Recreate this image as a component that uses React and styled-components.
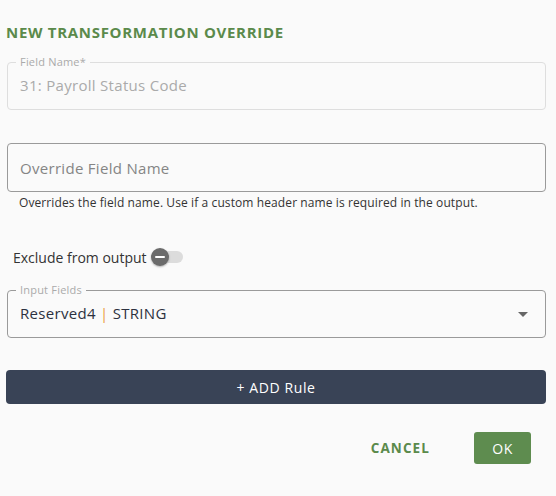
import React from "react";
import styled, { createGlobalStyle } from "styled-components";

const GlobalStyle = createGlobalStyle`
  html, body {
    margin: 0;
    padding: 0;
    background: #fafafa;
  }
  body {
    font-family: "Open Sans", "DejaVu Sans", sans-serif;
    color: #333;
  }
`;

const Dialog = styled.div`
  width: 556px;
  height: 496px;
  box-sizing: border-box;
  padding: 23px 10px 0 7px;
  background: #fafafa;
  display: flex;
  flex-direction: column;
`;

const Title = styled.h2`
  margin: 0 0 15px -1px;
  font-size: 15px;
  font-weight: 700;
  color: #5b8a4b;
  line-height: 18px;
  letter-spacing: 0.7px;
`;

const Outlined = styled.fieldset`
  margin: 0;
  padding: 0 12px 7px;
  min-width: 0;
  border: 1px solid ${(p) => (p.$disabled ? "#dedede" : "#9a9a9a")};
  border-radius: 4px;
`;

const Legend = styled.legend`
  padding: 0 4px;
  margin-left: -4px;
  font-size: 11px;
  line-height: 12px;
  color: #aaa;
  letter-spacing: 0.2px;
`;

const Inner = styled.div`
  height: 34px;
  display: flex;
  align-items: center;
`;

const PlainBox = styled.div`
  height: 49px;
  box-sizing: border-box;
  border: 1px solid #9a9a9a;
  border-radius: 4px;
  padding: 0 12px;
  display: flex;
  align-items: center;
  margin-top: ${(p) => p.$top}px;
`;

const Value = styled.span`
  flex: 1;
  font-size: 15px;
  letter-spacing: 0.3px;
  color: ${(p) => p.$color || "#2c3140"};
`;

const Pipe = styled.span`
  color: #eb9a3c;
`;

const Helper = styled.p`
  margin: 3px 0 0 12px;
  font-size: 12px;
  line-height: 16px;
  letter-spacing: 0.1px;
  color: #333;
`;

const SwitchRow = styled.label`
  display: flex;
  align-items: center;
  height: 18px;
  margin: 37px 0 18px 6px;
  font-size: 14px;
  color: #333;
`;

const Switch = styled.span`
  position: relative;
  width: 33px;
  height: 18px;
  margin-left: 4px;
  display: inline-block;
`;

const Track = styled.span`
  position: absolute;
  left: 4px;
  top: 3px;
  width: 28px;
  height: 12px;
  border-radius: 6px;
  background: #dcdcdc;
`;

const Thumb = styled.span`
  position: absolute;
  left: 0;
  top: 0;
  width: 18px;
  height: 18px;
  border-radius: 50%;
  background: #6b6b6b;
  box-shadow: 0 1px 2px rgba(0, 0, 0, 0.3);
  display: flex;
  align-items: center;
  justify-content: center;
  &::after {
    content: "";
    width: 10px;
    height: 2px;
    background: #fff;
    border-radius: 1px;
  }
`;

const Arrow = styled.span`
  width: 0;
  height: 0;
  border-left: 5px solid transparent;
  border-right: 5px solid transparent;
  border-top: 5px solid #666;
  margin: 2px 5px 0 0;
`;

const AddButton = styled.button`
  margin: 32px 0 0 -1px;
  height: 34px;
  width: 540px;
  border: none;
  border-radius: 4px;
  background: #394356;
  color: #fff;
  font-family: inherit;
  font-size: 14px;
  letter-spacing: 0.6px;
`;

const Actions = styled.div`
  display: flex;
  justify-content: flex-end;
  align-items: center;
  gap: 44px;
  margin: 28px 15px 0 0;
`;

const TextButton = styled.button`
  border: none;
  background: none;
  padding: 0;
  font-family: inherit;
  font-weight: 700;
  font-size: 13.5px;
  letter-spacing: 1.1px;
  color: #5b8a4b;
`;

const OkButton = styled.button`
  width: 57px;
  height: 32px;
  border: none;
  border-radius: 3px;
  background: #5e8c4f;
  color: #fff;
  font-family: inherit;
  font-size: 14px;
  letter-spacing: 0.5px;
`;

export default function App() {
  return (
    <Dialog>
      <GlobalStyle />
      <Title>NEW TRANSFORMATION OVERRIDE</Title>

      <Outlined $disabled>
        <Legend>Field Name*</Legend>
        <Inner>
          <Value $color="#aaa">31: Payroll Status Code</Value>
        </Inner>
      </Outlined>

      <PlainBox $top={33}>
        <Value $color="#858585">Override Field Name</Value>
      </PlainBox>
      <Helper>
        Overrides the field name. Use if a custom header name is required in the output.
      </Helper>

      <SwitchRow>
        Exclude from output
        <Switch>
          <Track />
          <Thumb />
        </Switch>
      </SwitchRow>

      <Outlined>
        <Legend>Input Fields</Legend>
        <Inner>
          <Value>
            Reserved4 <Pipe>|</Pipe> STRING
          </Value>
          <Arrow />
        </Inner>
      </Outlined>

      <AddButton>+ ADD Rule</AddButton>

      <Actions>
        <TextButton>CANCEL</TextButton>
        <OkButton>OK</OkButton>
      </Actions>
    </Dialog>
  );
}
